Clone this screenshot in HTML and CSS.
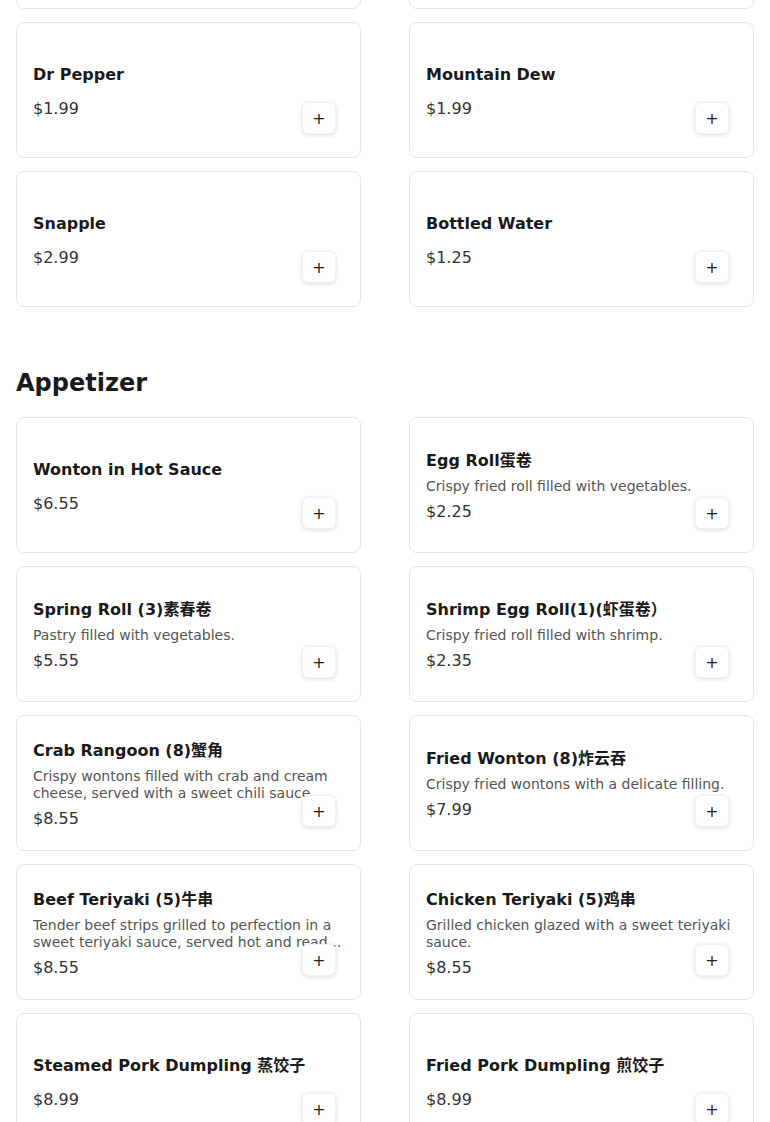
FILE: index.html
```html
<!DOCTYPE html>
<html lang="en">
  <head>
    <meta charset="UTF-8" />
    <meta name="viewport" content="width=device-width, initial-scale=1.0" />
    <title>Menu</title>
    <link rel="stylesheet" href="styles.css">
  </head>
  <body>
    <section class="menu-section menu-section-scrolled">
      <div class="item-grid">
        <div class="item-card">
          <div class="item-info">
            <h3 class="item-name">Coca-Cola</h3>
            <p class="item-price">$1.99</p>
          </div>
          <button class="add-btn" type="button">+</button>
        </div>
        <div class="item-card">
          <div class="item-info">
            <h3 class="item-name">Sprite</h3>
            <p class="item-price">$1.99</p>
          </div>
          <button class="add-btn" type="button">+</button>
        </div>
        <div class="item-card">
          <div class="item-info">
            <h3 class="item-name">Dr Pepper</h3>
            <p class="item-price">$1.99</p>
          </div>
          <button class="add-btn" type="button">+</button>
        </div>
        <div class="item-card">
          <div class="item-info">
            <h3 class="item-name">Mountain Dew</h3>
            <p class="item-price">$1.99</p>
          </div>
          <button class="add-btn" type="button">+</button>
        </div>
        <div class="item-card">
          <div class="item-info">
            <h3 class="item-name">Snapple</h3>
            <p class="item-price">$2.99</p>
          </div>
          <button class="add-btn" type="button">+</button>
        </div>
        <div class="item-card">
          <div class="item-info">
            <h3 class="item-name">Bottled Water</h3>
            <p class="item-price">$1.25</p>
          </div>
          <button class="add-btn" type="button">+</button>
        </div>
      </div>
    </section>

    <section class="menu-section">
      <h2 class="section-title">Appetizer</h2>
      <div class="item-grid">
        <div class="item-card">
          <div class="item-info">
            <h3 class="item-name">Wonton in Hot Sauce</h3>
            <p class="item-price">$6.55</p>
          </div>
          <button class="add-btn" type="button">+</button>
        </div>
        <div class="item-card">
          <div class="item-info">
            <h3 class="item-name">Egg Roll蛋卷</h3>
            <p class="item-desc">Crispy fried roll filled with vegetables.</p>
            <p class="item-price">$2.25</p>
          </div>
          <button class="add-btn" type="button">+</button>
        </div>
        <div class="item-card">
          <div class="item-info">
            <h3 class="item-name">Spring Roll (3)素春卷</h3>
            <p class="item-desc">Pastry filled with vegetables.</p>
            <p class="item-price">$5.55</p>
          </div>
          <button class="add-btn" type="button">+</button>
        </div>
        <div class="item-card">
          <div class="item-info">
            <h3 class="item-name">Shrimp Egg Roll(1)(虾蛋卷）</h3>
            <p class="item-desc">Crispy fried roll filled with shrimp.</p>
            <p class="item-price">$2.35</p>
          </div>
          <button class="add-btn" type="button">+</button>
        </div>
        <div class="item-card">
          <div class="item-info">
            <h3 class="item-name">Crab Rangoon (8)蟹角</h3>
            <p class="item-desc">Crispy wontons filled with crab and cream cheese, served with a sweet chili sauce.</p>
            <p class="item-price">$8.55</p>
          </div>
          <button class="add-btn" type="button">+</button>
        </div>
        <div class="item-card">
          <div class="item-info">
            <h3 class="item-name">Fried Wonton (8)炸云吞</h3>
            <p class="item-desc">Crispy fried wontons with a delicate filling.</p>
            <p class="item-price">$7.99</p>
          </div>
          <button class="add-btn" type="button">+</button>
        </div>
        <div class="item-card">
          <div class="item-info">
            <h3 class="item-name">Beef Teriyaki (5)牛串</h3>
            <p class="item-desc">Tender beef strips grilled to perfection in a sweet teriyaki sauce, served hot and ready to enjoy.</p>
            <p class="item-price">$8.55</p>
          </div>
          <button class="add-btn" type="button">+</button>
        </div>
        <div class="item-card">
          <div class="item-info">
            <h3 class="item-name">Chicken Teriyaki (5)鸡串</h3>
            <p class="item-desc">Grilled chicken glazed with a sweet teriyaki sauce.</p>
            <p class="item-price">$8.55</p>
          </div>
          <button class="add-btn" type="button">+</button>
        </div>
        <div class="item-card">
          <div class="item-info">
            <h3 class="item-name">Steamed Pork Dumpling 蒸饺子</h3>
            <p class="item-price">$8.99</p>
          </div>
          <button class="add-btn" type="button">+</button>
        </div>
        <div class="item-card">
          <div class="item-info">
            <h3 class="item-name">Fried Pork Dumpling 煎饺子</h3>
            <p class="item-price">$8.99</p>
          </div>
          <button class="add-btn" type="button">+</button>
        </div>
      </div>
    </section>
  </body>
</html>
```

FILE: styles.css
```css
* {
  margin: 0;
  padding: 0;
  box-sizing: border-box;
}

body {
  font-family: "DejaVu Sans", "Noto Sans CJK SC", sans-serif;
  background-color: #fff;
  color: #1a1a1a;
  padding: 0 16px;
}

/* page is scrolled: first row of drinks sits above the fold */
.menu-section-scrolled {
  margin-top: -127px;
}

.menu-section + .menu-section {
  margin-top: 62px;
}

.section-title {
  font-size: 24px;
  line-height: 28px;
  font-weight: bold;
  margin-bottom: 20px;
}

.item-grid {
  display: grid;
  grid-template-columns: 1fr 1fr;
  column-gap: 48px;
  row-gap: 13px;
}

.item-card {
  position: relative;
  height: 136px;
  border: 1px solid #e6e6e6;
  border-radius: 8px;
  padding: 2px 16px 0;
  display: flex;
  align-items: center;
}

.item-info {
  width: 100%;
  display: flex;
  flex-direction: column;
}

.item-name {
  font-size: 16px;
  line-height: 19px;
  font-weight: bold;
  color: #1a1a1a;
  margin-bottom: 8px;
}

.item-desc {
  font-size: 14px;
  line-height: 17px;
  color: #555;
  display: -webkit-box;
  -webkit-line-clamp: 2;
  -webkit-box-orient: vertical;
  overflow: hidden;
}

.item-price {
  font-size: 16px;
  line-height: 19px;
  color: #333;
  margin-top: 7px;
}

.add-btn {
  position: absolute;
  right: 24px;
  bottom: 23px;
  width: 34px;
  height: 32px;
  background-color: #fff;
  border: 1px solid #f0f0f0;
  border-radius: 6px;
  box-shadow: 0 1px 4px rgba(0, 0, 0, 0.14);
  font-family: "DejaVu Sans", sans-serif;
  font-size: 16px;
  color: #222;
  cursor: pointer;
}
```
